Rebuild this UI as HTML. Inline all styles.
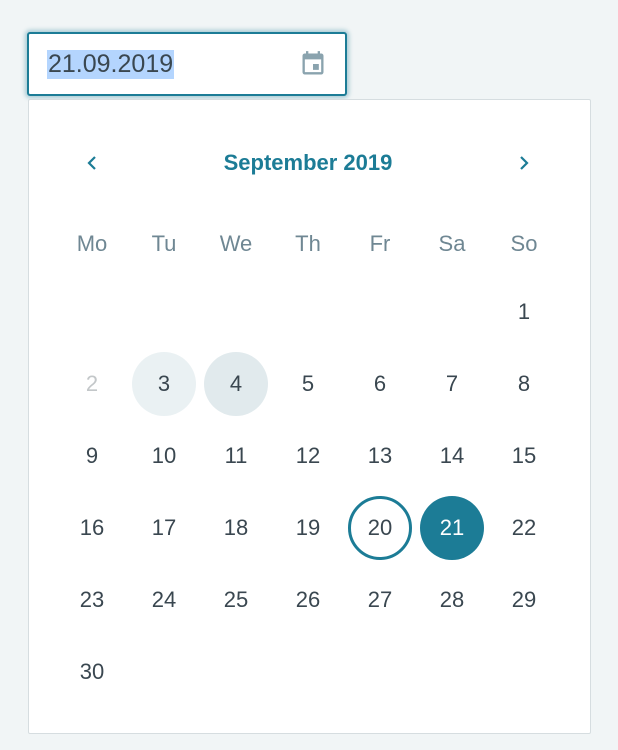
<!DOCTYPE html>
<html><head><style>
body{margin:0;width:618px;height:750px;background:#f1f5f6;font-family:"Liberation Sans",sans-serif;position:relative;overflow:hidden}
.inp{position:absolute;left:27px;top:32px;width:316px;height:60px;border:2px solid #1c7c96;border-radius:3px;background:#fff;box-shadow:0 0 4px 2px rgba(28,124,150,.35)}
.sel{position:absolute;left:18px;top:16px;height:29px;line-height:29px;background:#b4d5fe;color:#3a4750;font-size:25px;padding:0 1px}
.pop{position:absolute;left:28px;top:99px;width:561px;height:633px;background:#fff;border:1px solid #d6dde0;border-radius:2px}
.c{position:absolute;width:64px;height:64px;margin-left:-32px;margin-top:-32px;line-height:64px;text-align:center;font-size:22px;color:#3a4750;border-radius:50%;box-sizing:border-box}
.w{color:#6f8793;font-weight:normal}
</style></head><body>
<div class="inp"><div class="sel">21.09.2019</div>
<svg style="position:absolute;left:270px;top:16px" width="28" height="28" viewBox="0 0 24 24"><path fill="#8aa3ae" d="M19 3h-1V1h-2v2H8V1H6v2H5a2 2 0 0 0-2 2v14a2 2 0 0 0 2 2h14a2 2 0 0 0 2-2V5a2 2 0 0 0-2-2zm0 16H5V8h14zm-2-7h-5v5h5z"/></svg></div>
<div class="pop"></div>
<svg style="position:absolute;left:85px;top:155px" width="14" height="16" viewBox="0 0 14 16"><path d="M10 2 4 8l6 6" fill="none" stroke="#1c7c96" stroke-width="2.2"/></svg>
<svg style="position:absolute;left:517px;top:155px" width="14" height="16" viewBox="0 0 14 16"><path d="M4 2l6 6-6 6" fill="none" stroke="#1c7c96" stroke-width="2.2"/></svg>
<div style="position:absolute;left:158px;width:300px;top:149px;text-align:center;font-size:22px;color:#1c7c96;font-weight:bold;line-height:28px">September 2019</div>
<div id="g"></div>
<script>
var g=document.getElementById('g'),h='';
var xs=[92,164,236,308,380,452,524];
['Mo','Tu','We','Th','Fr','Sa','So'].forEach(function(d,i){h+='<div class="c w" style="left:'+xs[i]+'px;top:244px">'+d+'</div>'});
var d=1,pos=6,row=0;
for(d=1;d<=30;d++){var col=(d+5)%7;var r=Math.floor((d+5)/7);var y=312+72*r;var st='left:'+xs[col]+'px;top:'+y+'px;';
if(d==2)st+='color:#c3c7c9;';if(d==3)st+='background:#eaf1f3;';if(d==4)st+='background:#e1eaed;';
if(d==20)st+='border:3px solid #1c7c96;line-height:58px;';if(d==21)st+='background:#1c7c96;color:#fff;';
h+='<div class="c" style="'+st+'">'+d+'</div>';}
g.innerHTML=h;
</script>
</body></html>
